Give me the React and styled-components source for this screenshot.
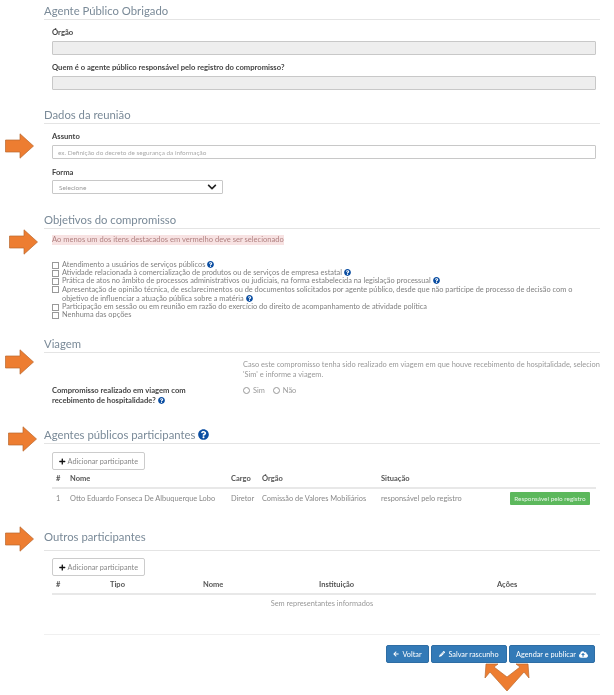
import React from 'react'
import styled, { createGlobalStyle } from 'styled-components'
import { FaArrowLeft, FaChevronDown, FaCloudUploadAlt, FaPencilAlt, FaPlus, FaQuestionCircle } from 'react-icons/fa'

const GlobalStyle = createGlobalStyle`
  html, body {
    margin: 0;
    padding: 0;
    background: #fff;
  }
  * { box-sizing: border-box; }
`

const objetivos = [
  { text: 'Atendimento a usuários de serviços públicos', help: true },
  { text: 'Atividade relacionada à comercialização de produtos ou de serviços de empresa estatal', help: true },
  { text: 'Prática de atos no âmbito de processos administrativos ou judiciais, na forma estabelecida na legislação processual', help: true },
  { text: 'Apresentação de opinião técnica, de esclarecimentos ou de documentos solicitados por agente público, desde que não participe de processo de decisão com o objetivo de influenciar a atuação pública sobre a matéria', help: true, tall: true },
  { text: 'Participação em sessão ou em reunião em razão do exercício do direito de acompanhamento de atividade política' },
  { text: 'Nenhuma das opções' },
]

const arrows = [
  { x: 5, y: 133 },
  { x: 9, y: 229 },
  { x: 5, y: 349 },
  { x: 8, y: 426 },
  { x: 5, y: 526 },
]

const App = () => (
  <Page>
    <GlobalStyle />
    <Content>
      <Heading>Agente Público Obrigado</Heading>
      <Body>
        <Label>Órgão</Label>
        <Input disabled />
        <Label>Quem é o agente público responsável pelo registro do compromisso?</Label>
        <Input disabled />
      </Body>

      <Heading $top={14}>Dados da reunião</Heading>
      <Body>
        <Label>Assunto</Label>
        <Input placeholder="ex. Definição do decreto de segurança da informação" />
        <Label $top={8}>Forma</Label>
        <Select>
          Selecione
          <FaChevronDown size={10} color="#222" />
        </Select>
      </Body>

      <Heading $top={15}>Objetivos do compromisso</Heading>
      <Body>
        <ErrorText>Ao menos um dos itens destacados em vermelho deve ser selecionado</ErrorText>
        <CheckList>
          {objetivos.map((item) => (
            <CheckRow key={item.text}>
              <Checkbox type="checkbox" />
              <CheckText $tall={item.tall}>
                {item.text} {item.help && <HelpIcon size={7} />}
              </CheckText>
            </CheckRow>
          ))}
        </CheckList>
      </Body>

      <Heading $top={14}>Viagem</Heading>
      <TravelGrid>
        <TravelHelp>
          Caso este compromisso tenha sido realizado em viagem em que houve recebimento de hospitalidade, selecione
          <br />
          'Sim' e informe a viagem.
        </TravelHelp>
        <TravelLabel>
          Compromisso realizado em viagem com recebimento de hospitalidade? <HelpIcon size={7} />
        </TravelLabel>
        <RadioGroup>
          <RadioOption><Radio type="radio" name="viagem" /> Sim</RadioOption>
          <RadioOption><Radio type="radio" name="viagem" /> Não</RadioOption>
        </RadioGroup>
      </TravelGrid>

      <Heading $top={19}>
        Agentes públicos participantes <HelpIcon size={11} />
      </Heading>
      <Body>
        <OutlineButton $top={8}><FaPlus size={7} color="#111" /> Adicionar participante</OutlineButton>
        <TableHead $columns="14px 161px 31px 119px 129px 1fr">
          <span>#</span><span>Nome</span><span>Cargo</span><span>Órgão</span><span>Situação</span>
        </TableHead>
        <TableRow $columns="14px 161px 31px 119px 129px 1fr">
          <span>1</span>
          <span>Otto Eduardo Fonseca De Albuquerque Lobo</span>
          <span>Diretor</span>
          <span>Comissão de Valores Mobiliários</span>
          <span>responsável pelo registro</span>
          <Badge>Responsável pelo registro</Badge>
        </TableRow>
      </Body>

      <Heading $top={16} $tall>Outros participantes</Heading>
      <Body>
        <OutlineButton $top={7}><FaPlus size={7} color="#111" /> Adicionar participante</OutlineButton>
        <TableHead $columns="54px 93px 116px 178px 1fr">
          <span>#</span><span>Tipo</span><span>Nome</span><span>Instituição</span><span>Ações</span>
        </TableHead>
        <EmptyRow>Sem representantes informados</EmptyRow>
      </Body>

      <Footer>
        <PrimaryButton $width={43}><FaArrowLeft size={6} /> Voltar</PrimaryButton>
        <PrimaryButton $width={76}><FaPencilAlt size={6} /> Salvar rascunho</PrimaryButton>
        <PrimaryButton $width={86}>Agendar e publicar <FaCloudUploadAlt size={9} /></PrimaryButton>
      </Footer>
    </Content>

    {arrows.map((a) => (
      <Marker key={a.y} style={{ left: a.x, top: a.y }} width="29" height="26" viewBox="0 0 29 26">
        <path d="M.5 7H15V.8L28.5 13 15 25.2V19H.5Z" fill="#ED7D31" stroke="#B9692F" strokeWidth=".7" />
      </Marker>
    ))}
    <Marker style={{ left: 484, top: 662 }} width="46" height="30" viewBox="0 0 46 30">
      <path d="M1 16 2 2H14L10 5 23 15 36 5 32 2H44L45 16 40 10 23 29 6 10Z" fill="#ED7D31" stroke="#B9692F" strokeWidth=".7" />
    </Marker>
  </Page>
)

export default App

const Page = styled.div`
  position: relative;
  width: 614px;
  height: 695px;
  overflow: hidden;
  background: #fff;
  font-family: "Lato", "Open Sans", sans-serif;
  filter: blur(0.45px);
`

const Content = styled.div`
  width: 556px;
  margin-left: 44px;
`

const Heading = styled.h2`
  display: flex;
  align-items: center;
  gap: 3px;
  margin: ${(p) => p.$top || 0}px 0 0;
  height: ${(p) => (p.$tall ? 28 : 20)}px;
  padding: ${(p) => (p.$tall ? '4px 0' : '2px 0 0')};
  border-bottom: 1px solid #e4e4e4;
  font-size: 11.3px;
  font-weight: 400;
  color: #7a8a98;
`

const Body = styled.div`
  padding: 0 4px 0 8px;
`

const Label = styled.div`
  margin-top: ${(p) => p.$top || 7}px;
  height: 10px;
  font-size: 7.65px;
  line-height: 10px;
  font-weight: 700;
  color: #444;
`

const Input = styled.input`
  display: block;
  width: 100%;
  height: 14px;
  margin-top: 4px;
  padding: 0 5px;
  border: 1px solid #c8c8c8;
  border-radius: 1px;
  font-family: inherit;
  font-size: 6.4px;
  background: #fff;
  &:disabled { background: #eee; }
  &::placeholder { color: #aaa; }
`

const Select = styled.div`
  display: flex;
  align-items: center;
  justify-content: space-between;
  width: 171px;
  height: 14px;
  margin-top: 3px;
  padding: 0 5px 0 6px;
  border: 1px solid #c8c8c8;
  border-radius: 1px;
  font-size: 6.5px;
  color: #999;
`

const ErrorText = styled.div`
  display: table;
  margin-top: 6px;
  font-size: 7.55px;
  line-height: 10px;
  color: #b08080;
  background: #f7e2e2;
`

const CheckList = styled.div`
  margin-top: 16px;
`

const CheckRow = styled.label`
  display: flex;
  align-items: flex-start;
  gap: 3px;
`

const Checkbox = styled.input`
  appearance: none;
  flex: none;
  width: 7px;
  height: 7px;
  margin: 1px 0 0;
  border: 1px solid #999;
  background: #fff;
`

const CheckText = styled.span`
  max-width: 526px;
  font-size: 7.4px;
  line-height: ${(p) => (p.$tall ? 9 : 8)}px;
  color: #808080;
`

const HelpIcon = styled(FaQuestionCircle)`
  flex: none;
  margin: -2px 0;
  color: #0b4ea2;
  vertical-align: 1px;
`

const TravelGrid = styled.div`
  display: grid;
  grid-template-columns: 191px 357px;
  padding-left: 8px;
`

const TravelHelp = styled.div`
  grid-column: 2;
  margin-top: 7px;
  overflow: hidden;
  white-space: nowrap;
  font-size: 7.45px;
  line-height: 10px;
  color: #999;
`

const TravelLabel = styled.div`
  margin-top: 5px;
  width: 150px;
  font-size: 7.65px;
  line-height: 10px;
  font-weight: 700;
  color: #444;
`

const RadioGroup = styled.div`
  display: flex;
  gap: 8px;
  margin-top: 5px;
  height: 10px;
`

const RadioOption = styled.label`
  display: flex;
  align-items: center;
  gap: 3px;
  font-size: 7.4px;
  color: #999;
`

const Radio = styled.input`
  appearance: none;
  width: 7px;
  height: 7px;
  margin: 0;
  border: 1px solid #999;
  border-radius: 50%;
`

const OutlineButton = styled.button`
  display: flex;
  align-items: center;
  gap: 2px;
  width: 93px;
  height: 18px;
  margin-top: ${(p) => p.$top}px;
  padding: 0 6px;
  border: 1px solid #ccc;
  border-radius: 2px;
  background: #fff;
  font-family: inherit;
  font-size: 7.3px;
  color: #888;
  white-space: nowrap;
`

const TableHead = styled.div`
  display: grid;
  grid-template-columns: ${(p) => p.$columns};
  align-items: center;
  height: 19px;
  padding-left: 4px;
  border-bottom: 2px solid #e8e8e8;
  font-size: 7.5px;
  font-weight: 700;
  color: #555;
`

const TableRow = styled.div`
  display: grid;
  grid-template-columns: ${(p) => p.$columns};
  align-items: center;
  height: 18px;
  padding-left: 4px;
  font-size: 7.4px;
  color: #888;
  white-space: nowrap;
`

const Badge = styled.span`
  justify-self: start;
  width: 80px;
  height: 13px;
  border-radius: 1px;
  background: #5cb85c;
  color: #e8f5e8;
  font-size: 6.4px;
  line-height: 13px;
  text-align: center;
`

const EmptyRow = styled.div`
  height: 40px;
  padding-top: 4px;
  border-bottom: 1px solid #f0f0f0;
  margin: 0 -4px 0 -8px;
  font-size: 7.4px;
  line-height: 10px;
  color: #999;
  text-align: center;
`

const Footer = styled.div`
  display: flex;
  justify-content: flex-end;
  gap: 2px;
  margin-top: 10px;
  padding-right: 5px;
`

const PrimaryButton = styled.button`
  display: flex;
  align-items: center;
  justify-content: center;
  gap: 3px;
  width: ${(p) => p.$width}px;
  height: 18px;
  padding: 0;
  border: 1px solid #2e6da4;
  border-radius: 2px;
  background: #337ab7;
  color: #fff;
  font-family: inherit;
  font-size: 7.3px;
  white-space: nowrap;
`

const Marker = styled.svg`
  position: absolute;
`
